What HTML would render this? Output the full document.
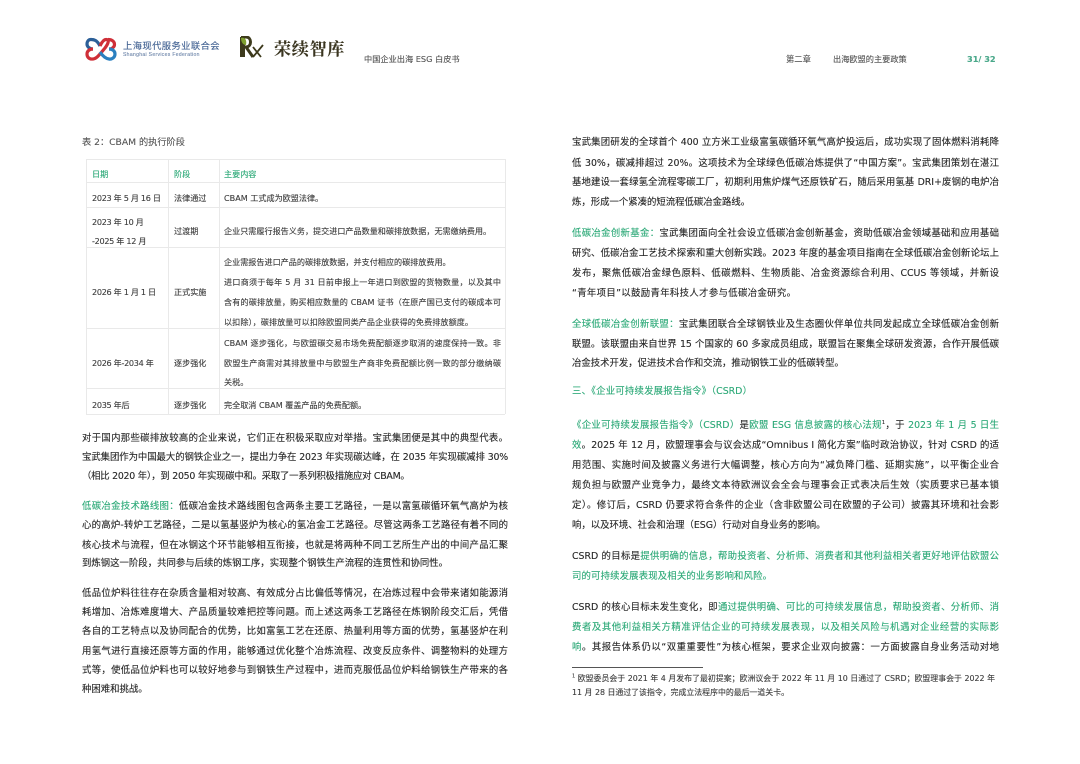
<!DOCTYPE html>
<html lang="zh-CN">
<head>
<meta charset="utf-8">
<title>CBAM</title>
<style>
html,body{margin:0;padding:0;background:#fff}
body{width:1080px;height:764px;position:relative;overflow:hidden;font-family:"DejaVu Sans","Noto Sans CJK SC",sans-serif;color:#262626}
#p{position:absolute;left:0;top:0;width:1080px;height:764px;filter:blur(.3px);-webkit-text-stroke:.12px currentColor}
.l,.r,.t{position:absolute;height:14px;line-height:14px;font-size:9.4px;white-space:nowrap}
.l,.r{margin-top:2px}
.t{margin-top:1px}
.l{left:82px;width:426px;text-align-last:justify}
.r{left:572px;width:427px;text-align-last:justify}
.n{text-align-last:left}
.t{font-size:8.1px;color:#3c3c3c}
.d{letter-spacing:-.3px}
.g,b{color:#2aa876;font-weight:normal}
.h{position:absolute;background:#e9e9e9;height:1px;left:86px;width:419px}
.v{position:absolute;background:#e9e9e9;width:1px;top:159px;height:255px}
.f{font-size:7.9px;color:#3c3c3c}
</style>
</head>
<body>
<div id="p">
<svg style="position:absolute;left:85px;top:37px" width="32" height="25" viewBox="0 0 32 25" fill="none">
<path d="M15 9C12 3 9 2.500 6 2.500C3 2.500 2 5 2 7C2 10 5 12 8 12" stroke="#2b5f98" stroke-width="3.200"/>
<path d="M8 12C4 12 2 14.500 2 17C2 20 4 22.500 8 22C12 21.500 15 17 20 11C23 7 25 2.500 21 2.500C18 2.500 16 7 15 9" stroke="#cf2f38" stroke-width="3.200"/>
<path d="M23 2.500C27 2.500 29.500 4.500 29.500 7.500C29.500 10 27 12 24 12" stroke="#cf2f38" stroke-width="3.200"/>
<path d="M24 12C27.500 12 30 14 30 17C30 20.500 27 22.500 24 22C20 21.500 17 18 15 15" stroke="#2b80c0" stroke-width="3.200"/>
</svg>
<div style="position:absolute;left:123px;top:40px;height:14px;line-height:14px;font-size:9.3px;color:#3f5f90;letter-spacing:.4px;white-space:nowrap">上海现代服务业联合会</div>
<div style="position:absolute;left:123px;top:51px;height:8px;line-height:8px;font-size:5px;color:#6e86aa;white-space:nowrap;font-family:'Liberation Sans',sans-serif;letter-spacing:.35px">Shanghai Services Federation</div>
<svg style="position:absolute;left:238px;top:36px" width="27" height="23" viewBox="0 0 27 23" fill="none">
<path d="M2 1H7V21H2Z" fill="#3d3a1c"/>
<path d="M3 1H8C14 1 14 11 8 11L15 21" stroke="#3d3a1c" stroke-width="3"/>
<path d="M3 2C7 1 9 4 8 9C5 9 3 6 3 2Z" fill="#7fa02f"/>
<path d="M15 11L23 21M25 9L15 21" stroke="#3d3a1c" stroke-width="1.800"/>
</svg>
<div style="position:absolute;left:274px;top:37px;height:22px;line-height:22px;font-size:17px;font-weight:bold;color:#3a3520;letter-spacing:.8px;white-space:nowrap;font-family:'Noto Serif CJK SC','Noto Sans CJK SC',serif">荣续智库</div>
<div class="t" style="left:364px;top:51px;font-size:8.2px;color:#555">中国企业出海 ESG 白皮书</div>
<div class="t" style="left:786px;top:51px;font-size:8.3px;color:#555">第二章</div>
<div class="t" style="left:833px;top:51px;font-size:8.2px;color:#555">出海欧盟的主要政策</div>
<div class="t" style="left:967px;top:51px;font-size:8.2px;color:#4aa88a;font-weight:bold">31/ 32</div>

<div class="l n" style="top:134px;font-size:9.2px;color:#555">表 2：CBAM 的执行阶段</div>

<div class="h" style="top:159px"></div><div class="h" style="top:182px"></div><div class="h" style="top:207px"></div><div class="h" style="top:247px"></div><div class="h" style="top:328px"></div><div class="h" style="top:388px"></div><div class="h" style="top:414px"></div>
<div class="v" style="left:86px"></div><div class="v" style="left:168px"></div><div class="v" style="left:219px"></div><div class="v" style="left:505px"></div>

<div class="t" style="left:92px;top:166px;color:#2aa876">日期</div><div class="t" style="left:174px;top:166px;color:#2aa876">阶段</div><div class="t" style="left:224px;top:166px;color:#2aa876">主要内容</div>
<div class="t d" style="left:92px;top:190px">2023 年 5 月 16 日</div><div class="t" style="left:174px;top:190px">法律通过</div><div class="t" style="left:224px;top:190px">CBAM 工式成为欧盟法律。</div>
<div class="t d" style="left:92px;top:214px">2023 年 10 月</div><div class="t d" style="left:92px;top:233px">-2025 年 12 月</div><div class="t" style="left:174px;top:223px">过渡期</div><div class="t" style="left:224px;top:223px">企业只需履行报告义务，提交进口产品数量和碳排放数据，无需缴纳费用。</div>
<div class="t d" style="left:92px;top:284px">2026 年 1 月 1 日</div><div class="t" style="left:174px;top:284px">正式实施</div>
<div class="t" style="left:224px;top:254px">企业需报告进口产品的碳排放数据，并支付相应的碳排放费用。</div>
<div class="t" style="left:224px;top:274px;width:277px;text-align-last:justify">进口商须于每年 5 月 31 日前申报上一年进口到欧盟的货物数量，以及其中</div>
<div class="t" style="left:224px;top:294px;width:277px;text-align-last:justify">含有的碳排放量，购买相应数量的 CBAM 证书（在原产国已支付的碳成本可</div>
<div class="t" style="left:224px;top:314px;width:249px;text-align-last:justify">以扣除），碳排放量可以扣除欧盟同类产品企业获得的免费排放额度。</div>
<div class="t d" style="left:92px;top:355px">2026 年-2034 年</div><div class="t" style="left:174px;top:355px">逐步强化</div>
<div class="t" style="left:224px;top:335px;width:277px;text-align-last:justify">CBAM 逐步强化，与欧盟碳交易市场免费配额逐步取消的速度保持一致。非</div>
<div class="t" style="left:224px;top:355px;width:277px;text-align-last:justify">欧盟生产商需对其排放量中与欧盟生产商非免费配额比例一致的部分缴纳碳</div>
<div class="t" style="left:224px;top:374px">关税。</div>
<div class="t d" style="left:92px;top:397px">2035 年后</div><div class="t" style="left:174px;top:397px">逐步强化</div><div class="t" style="left:224px;top:397px">完全取消 CBAM 覆盖产品的免费配额。</div>

<div class="l" style="top:430px">对于国内那些碳排放较高的企业来说，它们正在积极采取应对举措。宝武集团便是其中的典型代表。</div>
<div class="l" style="top:449px;letter-spacing:-.18px">宝武集团作为中国最大的钢铁企业之一，提出力争在 2023 年实现碳达峰，在 2035 年实现碳减排 30%</div>
<div class="l" style="top:468px;width:326px;letter-spacing:-.25px">（相比 2020 年），到 2050 年实现碳中和。采取了一系列积极措施应对 CBAM。</div>
<div class="l" style="top:498px"><b>低碳冶金技术路线图：</b>低碳冶金技术路线图包含两条主要工艺路径，一是以富氢碳循环氧气高炉为核</div>
<div class="l" style="top:517px">心的高炉-转炉工艺路径，二是以氢基竖炉为核心的氢冶金工艺路径。尽管这两条工艺路径有着不同的</div>
<div class="l" style="top:537px">核心技术与流程，但在冰钢这个环节能够相互衔接，也就是将两种不同工艺所生产出的中间产品汇聚</div>
<div class="l" style="top:555px;width:366px">到炼钢这一阶段，共同参与后续的炼钢工序，实现整个钢铁生产流程的连贯性和协同性。</div>
<div class="l" style="top:585px">低品位炉料往往存在杂质含量相对较高、有效成分占比偏低等情况，在冶炼过程中会带来诸如能源消</div>
<div class="l" style="top:604px">耗增加、冶炼难度增大、产品质量较难把控等问题。而上述这两条工艺路径在炼钢阶段交汇后，凭借</div>
<div class="l" style="top:623px">各自的工艺特点以及协同配合的优势，比如富氢工艺在还原、热量利用等方面的优势，氢基竖炉在利</div>
<div class="l" style="top:643px">用氢气进行直接还原等方面的作用，能够通过优化整个冶炼流程、改变反应条件、调整物料的处理方</div>
<div class="l" style="top:662px">式等，使低品位炉料也可以较好地参与到钢铁生产过程中，进而克服低品位炉料给钢铁生产带来的各</div>
<div class="l" style="top:681px;width:60px">种困难和挑战。</div>

<div class="r" style="top:134px">宝武集团研发的全球首个 400 立方米工业级富氢碳循环氧气高炉投运后，成功实现了固体燃料消耗降</div>
<div class="r" style="top:155px">低 30%，碳减排超过 20%。这项技术为全球绿色低碳冶炼提供了“中国方案”。宝武集团策划在湛江</div>
<div class="r" style="top:174px">基地建设一套绿氢全流程零碳工厂，初期利用焦炉煤气还原铁矿石，随后采用氢基 DRI+废钢的电炉冶</div>
<div class="r" style="top:194px;width:176px">炼，形成一个紧凑的短流程低碳冶金路线。</div>
<div class="r" style="top:225px"><b>低碳冶金创新基金：</b>宝武集团面向全社会设立低碳冶金创新基金，资助低碳冶金领域基础和应用基础</div>
<div class="r" style="top:245px">研究、低碳冶金工艺技术探索和重大创新实践。2023 年度的基金项目指南在全球低碳冶金创新论坛上</div>
<div class="r" style="top:265px">发布，聚焦低碳冶金绿色原料、低碳燃料、生物质能、冶金资源综合利用、CCUS 等领域，并新设</div>
<div class="r" style="top:285px;width:224px">“青年项目”以鼓励青年科技人才参与低碳冶金研究。</div>
<div class="r" style="top:316px"><b>全球低碳冶金创新联盟：</b>宝武集团联合全球钢铁业及生态圈伙伴单位共同发起成立全球低碳冶金创新</div>
<div class="r" style="top:336px">联盟。该联盟由来自世界 15 个国家的 60 多家成员组成，联盟旨在聚集全球研发资源，合作开展低碳</div>
<div class="r" style="top:355px;width:271px">冶金技术开发，促进技术合作和交流，推动钢铁工业的低碳转型。</div>
<div class="r" style="top:383px;width:180px;color:#2aa876">三、《企业可持续发展报告指令》（CSRD）</div>
<div class="r" style="top:417px"><b>《企业可持续发展报告指令》（CSRD）</b>是<b>欧盟 ESG 信息披露的核心法规</b><sup style="font-size:5px;line-height:0">1</sup>，于 <b>2023 年 1 月 5 日生</b></div>
<div class="r" style="top:437px"><b>效</b>。2025 年 12 月，欧盟理事会与议会达成“Omnibus I 简化方案”临时政治协议，针对 CSRD 的适</div>
<div class="r" style="top:457px">用范围、实施时间及披露义务进行大幅调整，核心方向为“减负降门槛、延期实施”，以平衡企业合</div>
<div class="r" style="top:477px">规负担与欧盟产业竞争力，最终文本待欧洲议会全会与理事会正式表决后生效（实质要求已基本锁</div>
<div class="r" style="top:497px">定）。修订后，CSRD 仍要求符合条件的企业（含非欧盟公司在欧盟的子公司）披露其环境和社会影</div>
<div class="r" style="top:517px;width:251px">响，以及环境、社会和治理（ESG）行动对自身业务的影响。</div>
<div class="r" style="top:548px">CSRD 的目标是<b>提供明确的信息，帮助投资者、分析师、消费者和其他利益相关者更好地评估欧盟公</b></div>
<div class="r" style="top:568px;width:200px;color:#2aa876">司的可持续发展表现及相关的业务影响和风险。</div>
<div class="r" style="top:599px">CSRD 的核心目标未发生变化，即<b>通过提供明确、可比的可持续发展信息，帮助投资者、分析师、消</b></div>
<div class="r" style="top:619px;color:#2aa876">费者及其他利益相关方精准评估企业的可持续发展表现，以及相关风险与机遇对企业经营的实际影</div>
<div class="r" style="top:639px"><b>响</b>。其报告体系仍以“双重重要性”为核心框架，要求企业双向披露：一方面披露自身业务活动对地</div>
<div style="position:absolute;left:572px;top:667px;width:131px;height:1px;background:#555"></div>
<div class="r f" style="top:670px;width:423px"><sup style="font-size:5px;line-height:0">1</sup> 欧盟委员会于 2021 年 4 月发布了最初提案；欧洲议会于 2022 年 11 月 10 日通过了 CSRD；欧盟理事会于 2022 年</div>
<div class="r f" style="top:684px;width:216px">11 月 28 日通过了该指令，完成立法程序中的最后一道关卡。</div>
</div>
</body>
</html>
